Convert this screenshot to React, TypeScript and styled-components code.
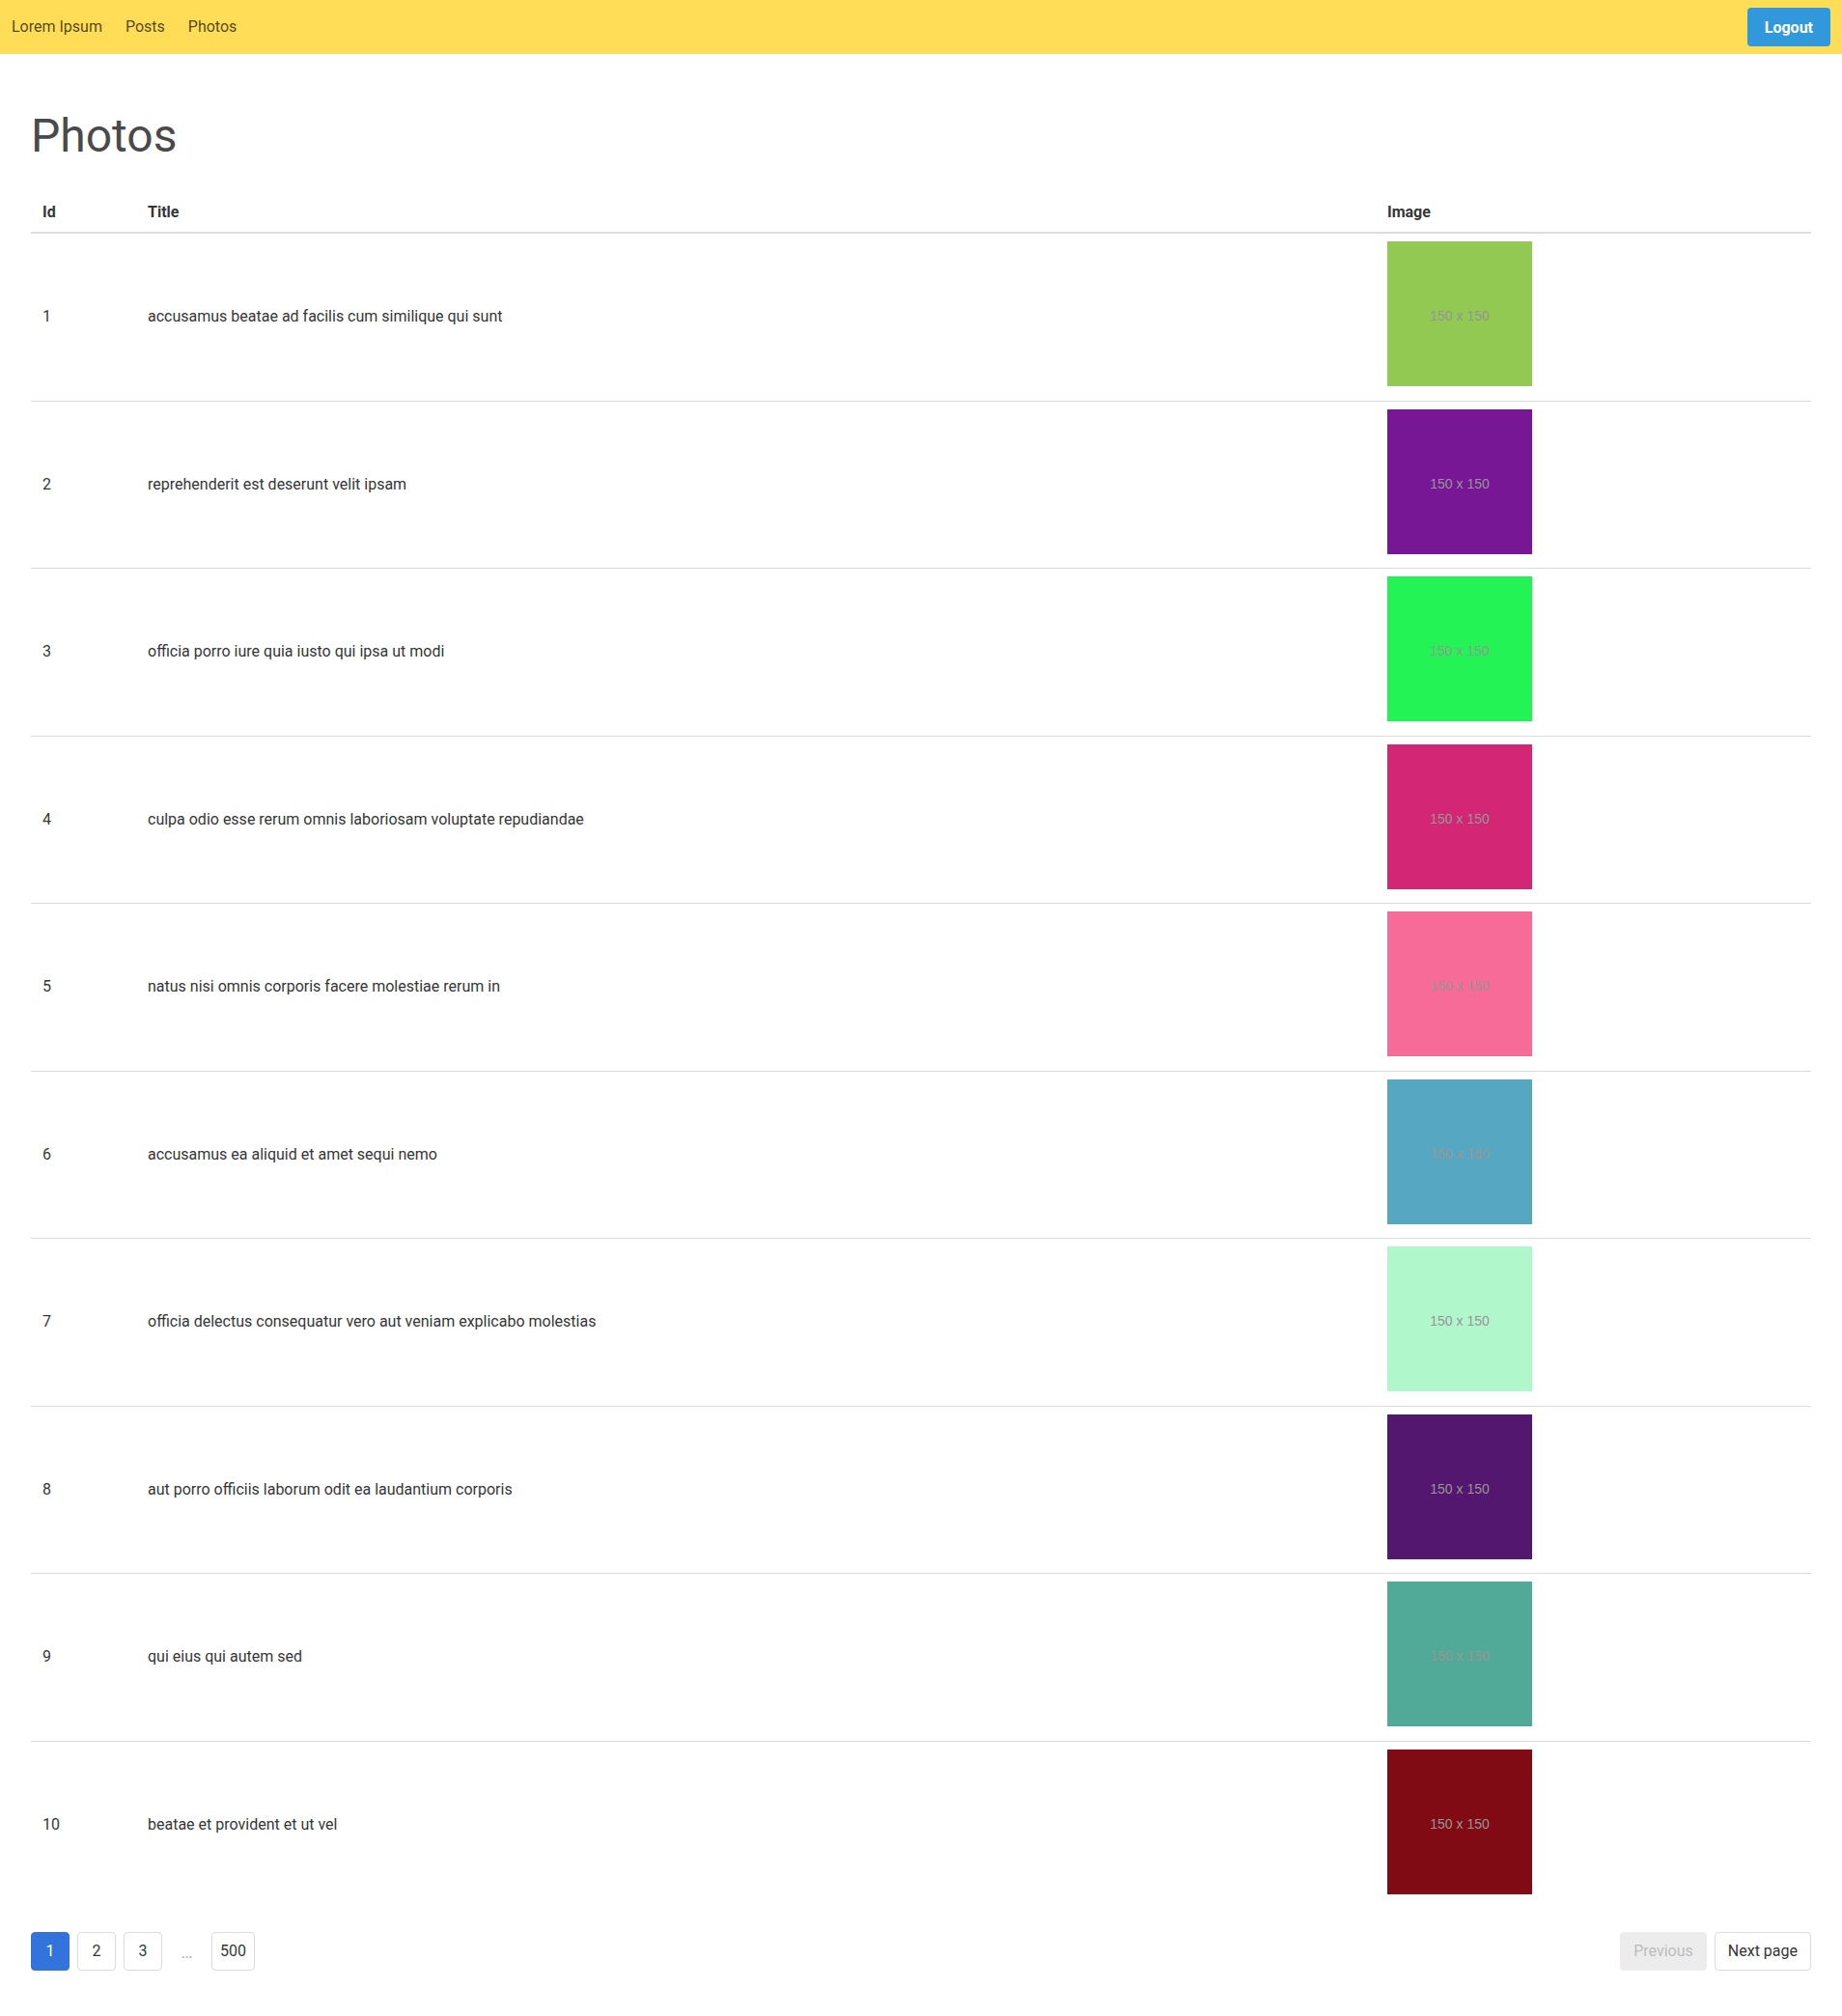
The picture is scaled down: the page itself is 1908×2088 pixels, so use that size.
import React from "react";
import styled, { createGlobalStyle } from "styled-components";

const GlobalStyle = createGlobalStyle`
  html, body {
    margin: 0;
    padding: 0;
    background: #ffffff;
  }
  body {
    font-family: Roboto, "Liberation Sans", Arial, sans-serif;
    font-size: 16px;
    line-height: 1.5;
    color: #4a4a4a;
  }
  * { box-sizing: border-box; }
`;

const Navbar = styled.nav`
  display: flex;
  align-items: stretch;
  justify-content: space-between;
  height: 56px;
  background: #ffdd57;
`;

const NavGroup = styled.div`
  display: flex;
  align-items: center;
`;

const NavItem = styled.a`
  display: flex;
  align-items: center;
  padding: 8px 12px;
  color: rgba(0, 0, 0, 0.7);
  font-size: 16px;
  line-height: 24px;
  text-decoration: none;
  cursor: pointer;
`;

const LogoutButton = styled.button`
  height: 40px;
  margin-right: 12px;
  padding: 0 17px;
  border: 1px solid transparent;
  border-radius: 4px;
  background: #3298dc;
  color: #ffffff;
  font-family: inherit;
  font-size: 16px;
  font-weight: 700;
  cursor: pointer;
`;

const Main = styled.main`
  padding: 58px 32px 48px;
`;

const Title = styled.h1`
  margin: 0 0 32px;
  font-size: 48px;
  font-weight: 400;
  line-height: 54px;
  color: #4a4a4a;
`;

const Table = styled.table`
  width: 100%;
  border-collapse: collapse;
  border-spacing: 0;
  table-layout: fixed;
  color: #363636;
`;

const Th = styled.th`
  padding: 8px 12px;
  text-align: left;
  font-weight: 700;
  line-height: 24px;
  color: #363636;
  border-bottom: 2px solid #dbdbdb;
`;

const Row = styled.tr`
  &:last-child td {
    border-bottom: 0;
  }
`;

const Td = styled.td`
  padding: 8px 12px;
  vertical-align: middle;
  line-height: 24px;
  border-bottom: 1px solid #dbdbdb;
`;

const Thumb = styled.div<{ $bg: string }>`
  display: flex;
  align-items: center;
  justify-content: center;
  width: 150px;
  height: 150px;
  margin-bottom: 6.5px;
  padding-top: 4px;
  background: ${(p) => p.$bg};
  color: #969696;
  font-family: "Liberation Sans", Arial, sans-serif;
  font-size: 14px;
`;

const Pagination = styled.nav`
  display: flex;
  align-items: center;
  justify-content: space-between;
  margin-top: 25px;
`;

const PageList = styled.ul`
  display: flex;
  align-items: center;
  gap: 8px;
  margin: 0;
  padding: 0;
  list-style: none;
`;

const PageLink = styled.a<{ $current?: boolean }>`
  display: inline-flex;
  align-items: center;
  justify-content: center;
  min-width: 40px;
  height: 40px;
  padding: 0 8px;
  border: 1px solid ${(p) => (p.$current ? "#3273dc" : "#dbdbdb")};
  border-radius: 4px;
  background: ${(p) => (p.$current ? "#3273dc" : "#ffffff")};
  color: ${(p) => (p.$current ? "#ffffff" : "#363636")};
  font-size: 16px;
  cursor: pointer;
`;

const Ellipsis = styled.span`
  display: inline-flex;
  align-items: center;
  justify-content: center;
  width: 35px;
  height: 40px;
  color: #b5b5b5;
  font-size: 18px;
`;

const NavButtons = styled.div`
  display: flex;
  gap: 8px;
`;

const PageNavButton = styled.a<{ $disabled?: boolean }>`
  display: inline-flex;
  align-items: center;
  justify-content: center;
  height: 40px;
  padding: 0 13px;
  border: 1px solid #dbdbdb;
  border-radius: 4px;
  background: ${(p) => (p.$disabled ? "#dbdbdb" : "#ffffff")};
  color: ${(p) => (p.$disabled ? "#7a7a7a" : "#363636")};
  opacity: ${(p) => (p.$disabled ? 0.5 : 1)};
  font-size: 16px;
  cursor: ${(p) => (p.$disabled ? "not-allowed" : "pointer")};
`;

const photos = [
  { id: 1, title: "accusamus beatae ad facilis cum similique qui sunt", color: "#92c952" },
  { id: 2, title: "reprehenderit est deserunt velit ipsam", color: "#771796" },
  { id: 3, title: "officia porro iure quia iusto qui ipsa ut modi", color: "#24f355" },
  { id: 4, title: "culpa odio esse rerum omnis laboriosam voluptate repudiandae", color: "#d32776" },
  { id: 5, title: "natus nisi omnis corporis facere molestiae rerum in", color: "#f66b97" },
  { id: 6, title: "accusamus ea aliquid et amet sequi nemo", color: "#56a8c2" },
  { id: 7, title: "officia delectus consequatur vero aut veniam explicabo molestias", color: "#b0f7cc" },
  { id: 8, title: "aut porro officiis laborum odit ea laudantium corporis", color: "#54176f" },
  { id: 9, title: "qui eius qui autem sed", color: "#51aa97" },
  { id: 10, title: "beatae et provident et ut vel", color: "#810b14" },
];

export default function App() {
  return (
    <>
      <GlobalStyle />
      <Navbar>
        <NavGroup>
          <NavItem>Lorem Ipsum</NavItem>
          <NavItem>Posts</NavItem>
          <NavItem>Photos</NavItem>
        </NavGroup>
        <NavGroup>
          <LogoutButton>Logout</LogoutButton>
        </NavGroup>
      </Navbar>
      <Main>
        <Title>Photos</Title>
        <Table>
          <colgroup>
            <col style={{ width: 109 }} />
            <col />
            <col style={{ width: 451 }} />
          </colgroup>
          <thead>
            <tr>
              <Th>Id</Th>
              <Th>Title</Th>
              <Th>Image</Th>
            </tr>
          </thead>
          <tbody>
            {photos.map((p) => (
              <Row key={p.id}>
                <Td>{p.id}</Td>
                <Td>{p.title}</Td>
                <Td>
                  <Thumb $bg={p.color}>150 x 150</Thumb>
                </Td>
              </Row>
            ))}
          </tbody>
        </Table>
        <Pagination>
          <PageList>
            <li><PageLink $current>1</PageLink></li>
            <li><PageLink>2</PageLink></li>
            <li><PageLink>3</PageLink></li>
            <li><Ellipsis>…</Ellipsis></li>
            <li><PageLink>500</PageLink></li>
          </PageList>
          <NavButtons>
            <PageNavButton $disabled>Previous</PageNavButton>
            <PageNavButton>Next page</PageNavButton>
          </NavButtons>
        </Pagination>
      </Main>
    </>
  );
}
